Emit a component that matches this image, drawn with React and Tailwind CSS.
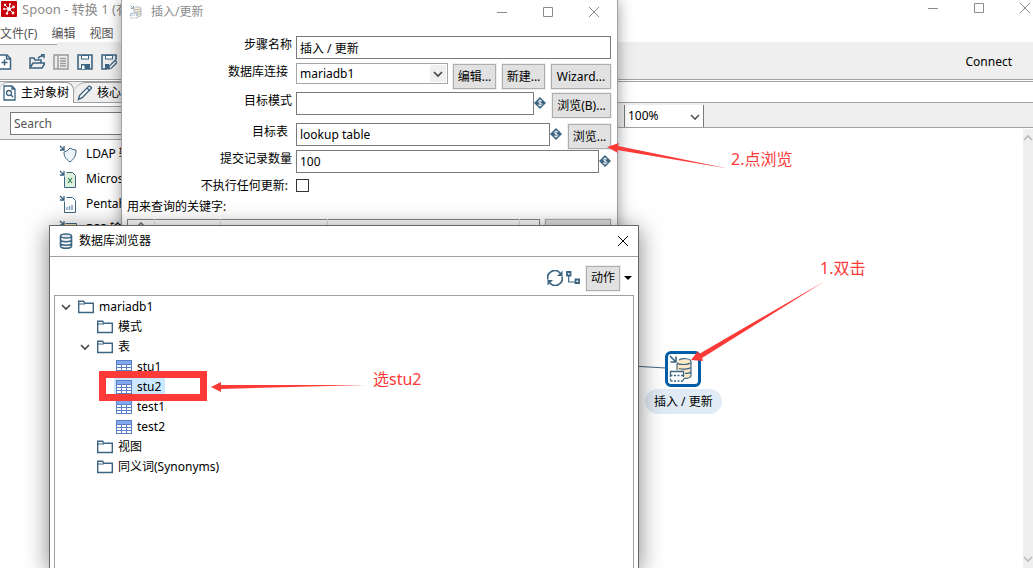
import { useState } from "react"

const INK = "#3d6480"

function Svg({ size = 16, className = "", children }) {
  return (
    <svg width={size} height={size} viewBox={`0 0 ${size} ${size}`} fill="none" className={`shrink-0 ${className}`}>
      {children}
    </svg>
  )
}

function SpoonLogo() {
  return (
    <Svg>
      <rect width="16" height="16" rx="1" fill="#c8000a" />
      <path d="M8 8 4 4M8 8l1-5M8 8l5-2M8 8l4 4M8 8l-2 4M8 8H3" stroke="#fff" strokeWidth="1" />
      <g fill="#fff">
        <circle cx="4" cy="4" r="1.2" />
        <circle cx="12.5" cy="6" r="1.4" />
        <circle cx="12" cy="12" r="1.4" />
        <circle cx="6" cy="12.5" r="1.2" />
        <circle cx="3" cy="8" r="1" />
        <circle cx="9" cy="3" r="1" />
        <circle cx="8" cy="8" r="2" />
      </g>
    </Svg>
  )
}

function NewFileIcon() {
  return (
    <Svg className="-ml-1">
      <path d="M2 1h9l3.500 3.500V15H2zM10.500 1v4h4" stroke={INK} strokeWidth="1.500" fill="#fff" />
      <path d="M8.500 5.500v6M5.500 8.500h6" stroke={INK} strokeWidth="1.500" />
    </Svg>
  )
}

function OpenIcon() {
  return (
    <Svg>
      <path d="M1 14V4h4l1 2h6v3M1 14l3-5h12l-3 5zM9 4.500C10 2 12 2 14 2M12 .8h3v3.500" stroke={INK} strokeWidth="1.500" />
    </Svg>
  )
}

function ListIcon() {
  return (
    <Svg>
      <path d="M1 1h14v14H1zM5 1v14M7 4.500h6M7 7h6M7 9.500h6M7 12h6" stroke="#9a9a9a" strokeWidth="1.500" />
    </Svg>
  )
}

function SaveIcon() {
  return (
    <Svg>
      <path d="M1 1h14v14H1z" stroke={INK} strokeWidth="1.600" />
      <path d="M4 1h8v4.500H4zM4 10h9v5H4z" fill={INK} />
      <path d="M5 2h6v2.500H5z" fill="#fff" />
      <path d="M5 11.500h2.500V15H5z" fill="#fff" />
    </Svg>
  )
}

function SaveAsIcon() {
  return (
    <Svg>
      <path d="M6 15H1V1h14v5" stroke={INK} strokeWidth="1.600" />
      <path d="M4 1h8v4.500H4zM4 10h4v5H4z" fill={INK} />
      <path d="M5 2h6v2.500H5z" fill="#fff" />
      <path d="m7.500 15 .8-3L14 6.500l2 2L10.500 14z" fill="#efefef" stroke={INK} strokeWidth="1.300" />
    </Svg>
  )
}

function TreeTabIcon() {
  return (
    <Svg>
      <path d="M3 1h8l3 3v11H3zM11 1v3h3" stroke={INK} strokeWidth="1.300" fill="#fff" />
      <circle cx="8" cy="8" r="2.500" stroke={INK} strokeWidth="1.300" />
      <path d="m10 10 2 2" stroke={INK} strokeWidth="1.400" />
    </Svg>
  )
}

function PencilIcon() {
  return (
    <Svg>
      <path d="m1.500 14.500 1-4L11.500 1.500Q13 .8 14.500 3L5.500 12.500zM10 3l3 3" stroke={INK} strokeWidth="1.400" fill="#fff" />
    </Svg>
  )
}

function StepIcon({ type }) {
  return (
    <Svg size={18}>
      <path d="m1 1 4 4M5 1v4H1" stroke={INK} strokeWidth="1.300" />
      {type === "ldap" && (
        <path d="M11 3q3 2 6 2c0 6-2 9-6 12-4-3-6-5-6-10q4-1 6-4z" fill="#eef4f8" stroke={INK} />
      )}
      {type === "excel" && (
        <>
          <path d="M7.500 2.500h6l3 3v12h-11v-11" fill="#dcf0dc" stroke={INK} />
          <path d="m9 8 4 5M13 8l-4 5" stroke="#2e7d4f" strokeWidth="1.200" />
        </>
      )}
      {type === "report" && (
        <>
          <path d="M7.500 2.500h6l3 3v12h-11v-11" fill="#fff" stroke={INK} />
          <path d="M8 15v-3M10.500 15v-4M13 15v-5" stroke="#7fa0bd" strokeWidth="1.500" />
        </>
      )}
      {type === "rss" && <path d="M6.500 3.500h11v14h-12v-11" fill="#f9e3b8" stroke={INK} />}
    </Svg>
  )
}

function InsertUpdateIcon({ size, className }) {
  return (
    <svg width={size} height={size} viewBox="0 0 28 28" fill="none" className={className}>
      <path d="m1 1 6 6M7 1.500V7H1.500" stroke={INK} strokeWidth="1.600" />
      <path d="M8 7c0-4 14-4 14 0v14c-1 2-4 2.500-7 2.500V16H8z" fill="#fbe9c8" />
      <path d="M10 5c3-2 12-2 12 2v14c-1 2-4 2.500-7 2.500M8 15V9M8 8c2 2 11 2 13 0M10 13.500c3 1 9 1 12-1M16 18.500c3 0 5-.5 6-1.500" stroke={INK} strokeWidth="1.200" />
      <path d="M1 16h13v10H1z" fill="#fff" />
      <path d="M1.500 20.500v-4h13v4" stroke={INK} strokeWidth="1.300" />
      <path d="M1.500 20.500h13M1.500 26h13M1.500 20v6M14.500 20v6" stroke={INK} strokeWidth="1.300" strokeDasharray="2 1.500" />
    </svg>
  )
}

function DatabaseIcon() {
  return (
    <Svg>
      <path d="M2.500 3v10c0 3 11 3 11 0V3M2.500 6.500c0 3 11 3 11 0M2.500 10c0 3 11 3 11 0" stroke={INK} strokeWidth="1.600" fill="#f4f7f9" />
      <ellipse cx="8" cy="3" rx="5.500" ry="2" fill="#dfe7ed" stroke={INK} strokeWidth="1.500" />
    </Svg>
  )
}

function RefreshIcon() {
  return (
    <Svg>
      <path d="M1 9.500A7 7 0 0 1 13 3M15 6.500A7 7 0 0 1 3 13" stroke={INK} strokeWidth="1.700" />
      <path d="M15.500.5v5.500H10zM.5 15.500V10H6z" fill={INK} />
    </Svg>
  )
}

function BranchIcon() {
  return (
    <Svg size={14}>
      <path d="M1 1h3.500v3.500H1zM9.500 8.500H13V12H9.500z" stroke={INK} strokeWidth="1.800" />
      <path d="M2.700 5v6H9" stroke={INK} strokeWidth="1.200" />
    </Svg>
  )
}

function FolderIcon() {
  return (
    <Svg>
      <path d="M.7 13.500V2.300h5l1 2h8.600v9.200z" fill="#fff" stroke={INK} strokeWidth="1.400" />
      <path d="M1 5h6" stroke={INK} />
    </Svg>
  )
}

function TableIcon() {
  return (
    <Svg>
      <path d="M0 1h16v14H0z" fill="#5b7fc4" />
      <path d="M1 2h14v3H1z" fill="#82a8ee" />
      <path d="M1 6h4v2H1zM6 6h4v2H6zM11 6h4v2h-4zM1 9h4v2H1zM6 9h4v2H6zM11 9h4v2h-4zM1 12h4v2H1zM6 12h4v2H6zM11 12h4v2h-4z" fill="#fff" />
    </Svg>
  )
}

function VariableIcon() {
  return (
    <Svg size={12} className="mt-[5px]">
      <path d="m6 0 6 6-6 6-6-6z" fill={INK} />
      <path d="M8 4.200C7 3 4.300 3.200 4.300 4.700S8 5.800 8 7.400 5 9 4 7.800M6 2.500v7" stroke="#fff" strokeWidth=".9" />
    </Svg>
  )
}

function Chevron({ className = "" }) {
  return (
    <svg width="10" height="10" viewBox="0 0 10 10" fill="none" className={`shrink-0 ${className}`}>
      <path d="m1 3 4 4 4-4" stroke="currentColor" strokeWidth="1.600" />
    </svg>
  )
}

function WindowButton({ kind, className = "" }) {
  return (
    <button type="button" aria-label={kind} className={`flex h-4 w-4 items-center justify-center ${className}`}>
      <svg width="12" height="12" viewBox="0 0 12 12" fill="none" stroke="currentColor">
        {kind === "minimize" && <path d="M1 6.500h10" />}
        {kind === "maximize" && <path d="M1.500 1.500h9v9h-9z" />}
        {kind === "close" && <path d="m1 1 10 10M11 1 1 11" />}
      </svg>
    </button>
  )
}

function WindowButtons() {
  return (
    <div className="flex gap-[30px] text-[#8c8c8c]">
      <WindowButton kind="minimize" />
      <WindowButton kind="maximize" />
      <WindowButton kind="close" />
    </div>
  )
}

function PushButton({ children, className = "" }) {
  return (
    <button
      type="button"
      className={`h-[25px] shrink-0 whitespace-nowrap border border-[#adadad] bg-[#e1e1e1] text-center text-black outline outline-[#efefef] ${className}`}
    >
      {children}
    </button>
  )
}

function FieldRow({ label, htmlFor, inset = false, className, children }) {
  return (
    <div className={`flex items-start ${className}`}>
      <label htmlFor={htmlFor} className={`w-[174px] shrink-0 text-right leading-[18px] ${inset ? "pr-2" : "pr-1"}`}>
        {label}
      </label>
      {children}
    </div>
  )
}

const inputClass = "h-[23px] min-w-0 flex-1 border border-[#7a7a7a] bg-white px-[3px] text-black outline-none"

function MainWindow() {
  const steps = [
    { type: "ldap", name: "LDAP 输" },
    { type: "excel", name: "Micros" },
    { type: "report", name: "Pentah" },
    { type: "rss", name: "RSS 输" },
  ]

  return (
    <div className="flex min-h-screen flex-col bg-white">
      <header className="flex h-[24px] items-start justify-between pl-[1px]">
        <div className="flex items-center gap-[5px] text-[13px] leading-[18px] text-[#8c8c8c]">
          <SpoonLogo />
          Spoon - 转换 1 (有
        </div>
        <WindowButtons />
      </header>
      <nav className="flex h-[18px] items-center gap-[14px] pt-[2px] text-[#555]">
        <button type="button">文件(F)</button>
        <button type="button">编辑</button>
        <button type="button">视图</button>
      </nav>
      <div className="bg-[#efefef]">
        <div className="h-[3px] w-[57px] border-b border-[#a0a0a0] bg-white" />
      </div>
      <div className="flex h-[35px] items-center justify-between border-b border-[#a0a0a0] bg-[#efefef] pr-[21px]">
        <div className="flex items-center gap-2">
          <button type="button" aria-label="新建" className="mr-[9px]"><NewFileIcon /></button>
          <button type="button" aria-label="打开"><OpenIcon /></button>
          <button type="button" aria-label="浏览"><ListIcon /></button>
          <button type="button" aria-label="保存"><SaveIcon /></button>
          <button type="button" aria-label="另存为"><SaveAsIcon /></button>
        </div>
        <button type="button">Connect</button>
      </div>

      <div className="mt-px flex flex-1 border-t border-[#a0a0a0]">
        <aside className="flex w-80 flex-col">
          <div className="flex h-[21px] bg-[#efefef]">
            <button type="button" className="flex items-center gap-1 rounded-t-lg border-r border-t border-[#a0a0a0] bg-white pl-px pr-1">
              <TreeTabIcon />
              主对象树
            </button>
            <button type="button" className="flex flex-1 items-center gap-1 rounded-tl-xl border-b border-t border-[#a0a0a0] pl-[3px]">
              <PencilIcon />
              核心对象
            </button>
          </div>
          <div className="mt-[3px] border-b border-t border-[#a0a0a0] bg-[#efefef] px-[10px] pb-1 pt-[5px]">
            <input aria-label="Search" placeholder="Search" className="h-[23px] w-full border border-[#7a7a7a] bg-white px-[3px] text-black outline-none placeholder:text-[#555]" />
          </div>
          <ul className="pl-[59px] pt-px">
            {steps.map((step) => (
              <li key={step.type} className="flex h-[25px] items-center gap-[9px]">
                <StepIcon type={step.type} />
                {step.name}
              </li>
            ))}
          </ul>
        </aside>

        <main className="flex flex-1 flex-col">
          <div className="h-5" />
          <div className="flex h-[26px] items-end border-b border-t border-[#a0a0a0] bg-[#efefef] pl-[304px]">
            <div className="relative">
              <select aria-label="缩放" defaultValue="100%" className="block h-[22px] w-[80px] appearance-none border-x border-[#7a7a7a] bg-white px-[3px] outline-none">
                <option>100%</option>
                <option>200%</option>
              </select>
              <Chevron className="pointer-events-none absolute right-1 top-[7px] text-[#555]" />
            </div>
          </div>
          <div className="flex flex-1">
            <div className="relative flex-1">
              {/* hop between the previous step and the selected one */}
              <svg className="absolute inset-0 h-full w-full">
                <path d="M260 235 346 240" stroke={INK} />
              </svg>
              <div className="absolute left-[325px] top-[223px] flex flex-col items-center gap-[2px]">
                <div className="flex h-9 w-9 items-center justify-center rounded-md border-3 border-[#005da6] bg-white">
                  <InsertUpdateIcon size={28} />
                </div>
                <span className="rounded-full bg-[#e1ebf5] px-[9px] leading-[25px]">插入 / 更新</span>
              </div>
            </div>
            <div className="mt-px flex w-[10px] flex-col items-center justify-between bg-[#efefef] py-1 text-[#bbb]">
              <Chevron className="rotate-180" />
              <Chevron />
            </div>
          </div>
        </main>
      </div>
    </div>
  )
}

function InsertUpdateDialog() {
  return (
    <section className="absolute -top-px left-[121px] w-[497px] border border-[#a0a0a0] bg-white pb-10 shadow-[0_2px_14px_rgba(0,0,0,0.4)]">
      <header className="flex h-6 items-center justify-between pl-2 pr-[15px] text-[#8c8c8c]">
        <div className="flex items-center gap-[7px]">
          <InsertUpdateIcon size={14} className="opacity-70" />
          插入/更新
        </div>
        <WindowButtons />
      </header>
      <form className="pr-[6px] pt-3">
        <FieldRow label="步骤名称" htmlFor="step-name" className="h-[27px]">
          <input id="step-name" defaultValue="插入 / 更新" className={inputClass} />
        </FieldRow>
        <FieldRow label="数据库连接" htmlFor="connection" inset className="h-[29px]">
          <div className="relative flex-1">
            <select id="connection" className="block h-[21px] w-full appearance-none border border-[#a5a5a5] bg-white px-[3px] outline-none">
              <option>mariadb1</option>
            </select>
            <span className="pointer-events-none absolute right-[2px] top-[2px] flex h-[17px] w-4 items-center justify-center bg-[#efefef] text-[#444]">
              <Chevron />
            </span>
          </div>
          <div className="flex gap-[6px] pl-[5px] pt-px">
            <PushButton className="w-[43px]">编辑...</PushButton>
            <PushButton className="w-[43px]">新建...</PushButton>
            <PushButton className="w-[60px]">Wizard...</PushButton>
          </div>
        </FieldRow>
        <FieldRow label="目标模式" htmlFor="schema" className="h-[31px]">
          <input id="schema" className={inputClass} />
          <VariableIcon />
          <PushButton className="ml-[6px] mt-px w-[59px]">浏览(B)...</PushButton>
        </FieldRow>
        <FieldRow label="目标表" htmlFor="target" inset className="h-[27px]">
          <input id="target" defaultValue="lookup table" className={inputClass} />
          <VariableIcon />
          <PushButton className="ml-[6px] mt-px w-[43px]">浏览...</PushButton>
        </FieldRow>
        <FieldRow label="提交记录数量" htmlFor="commit" className="h-[27px]">
          <input id="commit" defaultValue="100" className={inputClass} />
          <VariableIcon />
        </FieldRow>
        <FieldRow label="不执行任何更新:" htmlFor="no-update" inset className="h-[21px]">
          <input id="no-update" type="checkbox" className="mt-[2px] h-[13px] w-[13px] appearance-none border border-[#333] bg-white checked:bg-[#333]" />
        </FieldRow>
      </form>
      <h3 className="pl-[5px] leading-[18px]">用来查询的关键字:</h3>
      <div className="mt-[3px] flex items-start gap-[5px] pl-[5px] pr-[6px]">
        <table className="h-8 flex-1 table-fixed border-collapse border border-[#828790]">
          <thead>
            <tr>
              <th aria-label="#" className="w-[27px] border-r border-[#ddd] align-top">
                <Chevron className="mx-auto rotate-180 text-[#777]" />
              </th>
              <th aria-label="表字段" className="w-[66px] border-r border-[#ddd]" />
              <th aria-label="比较符" className="w-[107px] border-r border-[#ddd]" />
              <th aria-label="流里的字段1" className="border-r border-[#ddd]" />
              <th aria-label="流里的字段2" className="w-5" />
            </tr>
          </thead>
        </table>
        <PushButton className="w-[66px]" />
      </div>
    </section>
  )
}

function TreeNode({ node, depth, selected, onSelect }) {
  const indent = ["pl-[6px]", "pl-[25px]", "pl-[44px]"][depth]
  const isSelected = node.name === selected

  return (
    <li>
      <div className={`flex h-5 items-center ${indent}`}>
        <span className="w-[15px] text-[#444]">{node.open && <Chevron />}</span>
        <button
          type="button"
          onClick={() => onSelect(node.name)}
          className={`flex h-5 items-center gap-[5px] pl-[2px] pr-1 ${isSelected ? "bg-[#cce8ff]" : ""}`}
        >
          {depth === 2 ? <TableIcon /> : <FolderIcon />}
          {node.name}
        </button>
      </div>
      {node.children && (
        <ul>
          {node.children.map((child) => (
            <TreeNode key={child.name} node={child} depth={depth + 1} selected={selected} onSelect={onSelect} />
          ))}
        </ul>
      )}
    </li>
  )
}

function DatabaseExplorer() {
  const [selected, setSelected] = useState("stu2")

  const root = {
    name: "mariadb1",
    open: true,
    children: [
      { name: "模式" },
      {
        name: "表",
        open: true,
        children: [{ name: "stu1" }, { name: "stu2" }, { name: "test1" }, { name: "test2" }],
      },
      { name: "视图" },
      { name: "同义词(Synonyms)" },
    ],
  }

  return (
    <section className="absolute bottom-0 left-[49px] top-[225px] flex w-[590px] flex-col border border-b-0 border-[#666] bg-white shadow-[0_4px_22px_rgba(0,0,0,0.5)]">
      <header className="flex h-[31px] items-center justify-between border-b border-[#a0a0a0] pb-px pl-2 pr-[7px]">
        <div className="flex items-center gap-[5px]">
          <DatabaseIcon />
          数据库浏览器
        </div>
        <WindowButton kind="close" />
      </header>
      <div className="flex h-[38px] items-center justify-end gap-[3px] pr-[6px] pt-1">
        <button type="button" aria-label="刷新"><RefreshIcon /></button>
        <button type="button" aria-label="展开"><BranchIcon /></button>
        <PushButton className="ml-[3px] w-[34px]">动作</PushButton>
        <button type="button" aria-label="更多" className="pl-px">
          <svg width="8" height="5" viewBox="0 0 8 5"><path d="M0 0h8L4 4z" /></svg>
        </button>
      </div>
      <div className="mx-1 flex-1 border border-b-0 border-[#a0a0a0] pt-px">
        <ul>
          <TreeNode node={root} depth={0} selected={selected} onSelect={setSelected} />
        </ul>
      </div>
    </section>
  )
}

function Annotations() {
  return (
    <div className="pointer-events-none absolute inset-0 text-[16px] leading-6 text-[#fc3a38]">
      <svg className="absolute inset-0 h-full w-full" fill="#fc3a38">
        <path d="m607 147 12-4-1 3 110 22.500L617 150l1 3z" />
        <path d="m691 360 7-9 1 3 126-73-123 77 1 3z" />
        <path d="m211 387 10-5v3l145 0-145 4v3z" />
      </svg>
      <div className="absolute left-[99px] top-[371px] h-[30px] w-[108px] border-7 border-[#fc3a38]" />
      <span className="absolute left-[820px] top-[256px]">1.双击</span>
      <span className="absolute left-[731px] top-[147px]">2.点浏览</span>
      <span className="absolute left-[373px] top-[367px]">选stu2</span>
    </div>
  )
}

export default function App() {
  return (
    <div className="relative min-h-screen overflow-hidden font-['Noto_Sans','Noto_Sans_CJK_SC',sans-serif] text-[12px] leading-4 text-black">
      <MainWindow />
      <InsertUpdateDialog />
      <DatabaseExplorer />
      <Annotations />
    </div>
  )
}
